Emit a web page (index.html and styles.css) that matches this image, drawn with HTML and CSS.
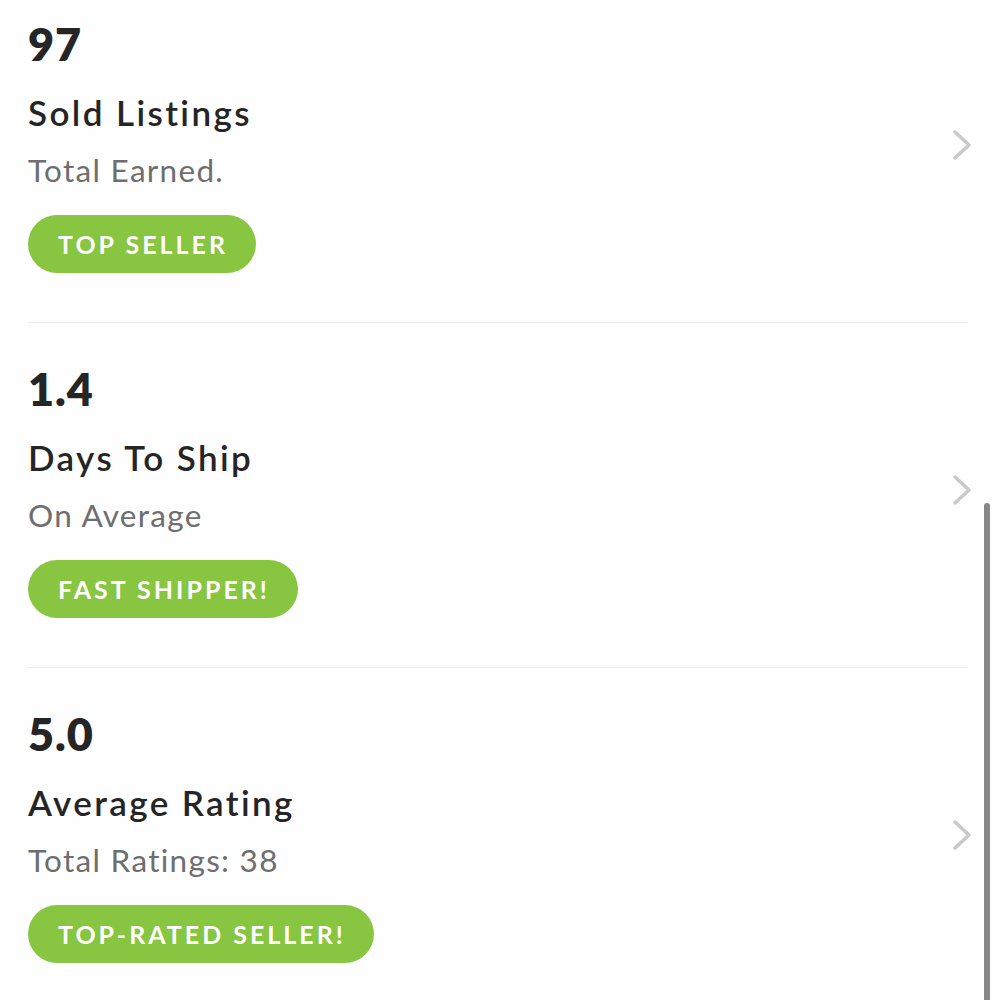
FILE: index.html
```html
<!DOCTYPE html>
<html lang="en">
<head>
    <meta charset="UTF-8">
    <title>Seller Stats</title>
    <link rel="stylesheet" href="styles.css">
</head>
<body>

    <div class="stats">
        <div class="stat-row">
            <div class="stat-info">
                <div class="stat-value">97</div>
                <div class="stat-title">Sold Listings</div>
                <div class="stat-sub">Total Earned.</div>
                <span class="badge">TOP SELLER</span>
            </div>
            <svg class="chevron" viewBox="0 0 20 32"><path d="M3 3 L17 16 L3 29" /></svg>
        </div>

        <div class="stat-row">
            <div class="stat-info">
                <div class="stat-value">1.4</div>
                <div class="stat-title">Days To Ship</div>
                <div class="stat-sub">On Average</div>
                <span class="badge">FAST SHIPPER!</span>
            </div>
            <svg class="chevron" viewBox="0 0 20 32"><path d="M3 3 L17 16 L3 29" /></svg>
        </div>

        <div class="stat-row">
            <div class="stat-info">
                <div class="stat-value">5.0</div>
                <div class="stat-title">Average Rating</div>
                <div class="stat-sub">Total Ratings: 38</div>
                <span class="badge">TOP-RATED SELLER!</span>
            </div>
            <svg class="chevron" viewBox="0 0 20 32"><path d="M3 3 L17 16 L3 29" /></svg>
        </div>
    </div>

    <!-- scroll indicator -->
    <div class="scrollbar"></div>

</body>
</html>
```

FILE: styles.css
```css
body {
    margin: 0;
    background: #fefefe;
    font-family: Lato, 'Noto Sans', sans-serif;
    color: #252525;
    overflow: hidden;
}

.stats {
    margin-top: -22px;
    padding: 0 32px 0 28px;
}

.stat-row {
    display: flex;
    align-items: center;
    justify-content: space-between;
    padding: 38px 0 49px;
    border-bottom: 1px solid #ececec;
}

.stat-info {
    display: flex;
    flex-direction: column;
    align-items: flex-start;
}

.stat-value {
    font-size: 45px;
    font-weight: 800;
    line-height: 56px;
    letter-spacing: 1px;
}

.stat-title {
    margin-top: 18px;
    font-size: 35px;
    font-weight: 600;
    line-height: 44px;
    letter-spacing: 2.4px;
}

.stat-sub {
    margin-top: 16px;
    font-size: 31.5px;
    color: #6e6e6e;
    line-height: 40px;
    letter-spacing: 1.3px;
}

.badge {
    margin-top: 25px;
    background: #88c540;
    color: #fff;
    font-size: 25px;
    font-weight: 700;
    letter-spacing: 3px;
    line-height: 58px;
    padding: 0 28px 0 30px;
    border-radius: 29px;
}

.chevron {
    width: 20px;
    height: 32px;
    margin-right: -4px;
    fill: none;
    stroke: #c9c9c9;
    stroke-width: 3.5;
    stroke-linecap: round;
    stroke-linejoin: round;
}

.scrollbar {
    position: fixed;
    right: 10px;
    top: 503px;
    bottom: 0;
    width: 6px;
    border-radius: 3px 3px 0 0;
    background: #888;
}
```
